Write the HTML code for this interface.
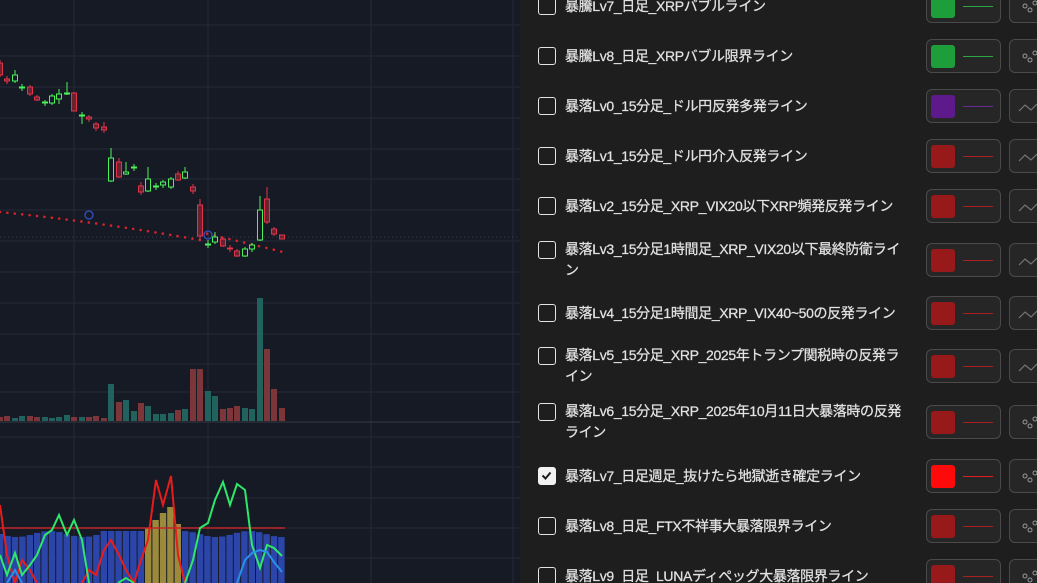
<!DOCTYPE html>
<html><head><meta charset="utf-8">
<style>
*{margin:0;padding:0;box-sizing:border-box}
html,body{overflow:hidden}
body{width:1037px;height:583px;background:#161a25;position:relative;font-family:"Liberation Sans","Noto Sans CJK JP",sans-serif}
#chart{position:absolute;left:0;top:0}
#panel{position:absolute;left:520px;top:0;width:517px;height:583px;background:#1e1e1e;overflow:hidden}
.row{position:absolute;left:0;width:517px}
.cb{position:absolute;left:18px;width:18px;height:18px;border:1.5px solid #e3e3e3;border-radius:3px}
.cb.on{background:#f2f2f2;border-color:#f2f2f2}
.lbl{position:absolute;left:45px;color:#e2e2e2;font-size:14px;line-height:21px;white-space:nowrap;letter-spacing:-0.35px;-webkit-text-stroke:0.25px #e2e2e2}
.btn{position:absolute;left:406px;width:75px;height:34px;border:1px solid #4a4a4a;border-radius:6px;background:#262626}
.sw{position:absolute;left:4px;top:5px;width:24px;height:23px;border-radius:3px}
.ln{position:absolute;left:36px;top:16px;width:30px;height:1px}
.btn2{position:absolute;left:489px;width:40px;height:34px;border:1px solid #4a4a4a;border-radius:6px;background:#262626}
</style></head><body>
<svg id="chart" width="520" height="583" viewBox="0 0 520 583"></svg>
<div id="panel"></div>
<script>
const S='http://www.w3.org/2000/svg';const svg=document.getElementById('chart');
function el(t,a){const e=document.createElementNS(S,t);for(const k in a)e.setAttribute(k,a[k]);svg.appendChild(e);return e}
[74,208,371,513].forEach(x=>el('line',{x1:x,y1:0,x2:x,y2:583,stroke:'#242936','stroke-width':1}));
[25,56,87,118,149,179,210,241,272,303,334,364,392,437,467,498,528,558].forEach(y=>el('line',{x1:0,y1:y,x2:520,y2:y,stroke:'#242936','stroke-width':1}));
el('line',{x1:0,y1:422,x2:520,y2:422,stroke:'#363a45','stroke-width':1});
el('line',{x1:0,y1:237,x2:520,y2:237,stroke:'#3a3f4c','stroke-width':1,'stroke-dasharray':'1 3'});
for(let x=0;x<=284;x+=7.4){let y=x<200?212+x*0.1+ (x/200)*(x/200)*8:232+(x-200)*0.24;el('circle',{cx:x,cy:y,r:1.3,fill:'#d3242b'})}
el('circle',{cx:89,cy:215,r:4,fill:'none',stroke:'#3050c8','stroke-width':1.3});
el('circle',{cx:208,cy:235,r:4,fill:'none',stroke:'#3050c8','stroke-width':1.3});
const C=[[0,'r',63,75,60,77],[7,'r',79,81,76,84],[15,'g',75,81,70,83],[22,'g',87,88,84,91],[30,'r',87,94,85,96],[37,'r',97,100,95,101],[45,'g',102,103,100,106],[52,'g',96,103,94,105],[59,'g',94,99,89,104],[67,'g',93,94,82,95],[74,'r',93,111,92,111],[82,'g',115,116,112,124],[89,'r',117,119,115,122],[96,'r',124,128,122,131],[104,'r',127,130,122,133],[111,'g',158,181,148,182],[119,'r',162,177,158,178],[126,'g',172,174,162,175],[134,'g',167,168,164,171],[141,'r',186,192,182,195],[148,'g',179,191,167,192],[156,'g',186,187,183,190],[163,'g',182,185,180,188],[171,'g',179,187,177,189],[178,'r',174,180,171,181],[185,'g',172,178,167,179],[193,'r',187,191,184,194],[200,'r',205,236,199,240],[208,'g',244,245,240,248],[215,'g',237,242,232,244],[223,'r',239,246,237,247],[230,'r',248,249,245,252],[237,'r',251,256,249,257],[245,'g',249,256,247,257],[252,'g',245,249,243,252],[260,'g',210,240,196,241],[267,'r',199,222,187,224],[274,'r',229,234,227,236],[282,'r',235,239,235,239]];
C.forEach(c=>{const col=c[1]=='g'?'#4cf25a':'#e0344a';el('line',{x1:c[0],y1:c[4],x2:c[0],y2:c[5],stroke:col,'stroke-width':1});el('rect',{x:c[0]-2.5,y:c[2],width:5,height:Math.max(1,c[3]-c[2]),fill:c[1]=='g'?'#161a25':'#6a2230',stroke:col,'stroke-width':1})});
const V=[[0,'r',417],[7,'r',416],[15,'g',418],[22,'g',416],[30,'r',416],[37,'r',417],[45,'g',417],[52,'g',418],[59,'g',417],[67,'g',415],[74,'r',417],[82,'g',417],[89,'r',417],[96,'r',416],[104,'r',418],[111,'g',384],[119,'r',402],[126,'g',400],[134,'g',411],[141,'r',403],[148,'g',406],[156,'g',414],[163,'g',414],[171,'g',413],[178,'r',410],[185,'g',409],[193,'r',369],[200,'r',369],[208,'g',391],[215,'g',396],[223,'r',409],[230,'r',408],[237,'r',406],[245,'g',408],[252,'g',409],[260,'g',298],[267,'r',349],[274,'r',389],[282,'r',408]];
V.forEach(v=>el('rect',{x:v[0]-3,y:v[2],width:6,height:421-v[2],fill:v[1]=='g'?'#22625e':'#7c3538'}));
for(let i=0;i<39;i++){const x=i*7.4-3;const yel=i>=20&&i<=24;let top=534+Math.sin(i*0.7)*3;if(yel)top=[528,520,513,507,524][i-20];if(i>=14&&i<20)top=531;el('rect',{x:x,y:top,width:6.4,height:583-top,fill:yel?'#9c8a3c':'#2c45a8'})}
el('line',{x1:0,y1:528,x2:285,y2:528,stroke:'#c0262b','stroke-width':1.5});
const poly=(pts,col)=>el('polyline',{points:pts,fill:'none',stroke:col,'stroke-width':2});
poly('0,505 7,555 15,583 22,560 30,570 37,583','#e81c1c');
poly('82,583 89,570 96,575 104,550 111,540 119,555 126,570 134,583','#e81c1c');
poly('134,583 141,560 148,540 156,480 163,505 171,476 178,555 185,583','#e81c1c');
poly('0,555 7,575 15,553 22,575 30,565 37,555 45,535 52,530 59,515 67,535 74,520 82,540 89,583','#2ee86a');
poly('118,583 126,578 134,583','#2ee86a');
poly('185,583 193,560 200,528 208,523 215,500 223,482 230,505 237,484 245,490 252,545 260,568 267,545 274,548 282,556','#2ee86a');
poly('7,583 15,570 22,583','#2a8fe8');
poly('237,583 245,560 252,553 260,550 267,552 274,562 282,572','#2a8fe8');
const P=document.getElementById('panel');
const R=[
[6,['暴騰Lv7_日足_XRPバブルライン'],'#1d9e3a','#2aa846','dots',false],
[56,['暴騰Lv8_日足_XRPバブル限界ライン'],'#1d9e3a','#2aa846','dots',false],
[106,['暴落Lv0_15分足_ドル円反発多発ライン'],'#5e1a8a','#6a2a9a','wave',false],
[156,['暴落Lv1_15分足_ドル円介入反発ライン'],'#981919','#a82020','wave',false],
[206,['暴落Lv2_15分足_XRP_VIX20以下XRP頻発反発ライン'],'#981919','#a82020','wave',false],
[260,['暴落Lv3_15分足1時間足_XRP_VIX20以下最終防衛ライ','ン'],'#981919','#a82020','wave',false],
[313,['暴落Lv4_15分足1時間足_XRP_VIX40~50の反発ライン'],'#981919','#a82020','wave',false],
[366,['暴落Lv5_15分足_XRP_2025年トランプ関税時の反発ラ','イン'],'#981919','#a82020','wave',false],
[422,['暴落Lv6_15分足_XRP_2025年10月11日大暴落時の反発','ライン'],'#981919','#a82020','dots',false],
[476,['暴落Lv7_日足週足_抜けたら地獄逝き確定ライン'],'#ff0a0a','#e02020','dots',true],
[526,['暴落Lv8_日足_FTX不祥事大暴落限界ライン'],'#981919','#a82020','dots',false],
[576,['暴落Lv9_日足_LUNAディペッグ大暴落限界ライン'],'#981919','#a82020','dots',false]];
R.forEach(r=>{const [cy,t,sw,lc,ic,on]=r;const two=t.length>1;
let h='';const cbTop=two?cy-10-9:cy-9;
h+=`<div class="cb${on?' on':''}" style="top:${cbTop}px">${on?'<svg width="15" height="15" viewBox="0 0 15 15" style="position:absolute;left:0;top:0"><path d="M3.5 7.5l3 3 5-6" fill="none" stroke="#1e1e1e" stroke-width="2"/></svg>':''}</div>`;
h+=`<div class="lbl" style="top:${(two?cy-21:cy-10.5)}px">${t.join('<br>')}</div>`;
h+=`<div class="btn" style="top:${cy-17}px"><div class="sw" style="background:${sw}"></div><div class="ln" style="background:${lc}"></div></div>`;
const icon=ic=='dots'?'<svg width="30" height="30" viewBox="0 0 30 30" style="position:absolute;left:6px;top:2px"><circle cx="9" cy="14" r="2" fill="none" stroke="#999"/><circle cx="14" cy="18" r="2" fill="none" stroke="#999"/><circle cx="19" cy="11" r="2" fill="none" stroke="#999"/></svg>':'<svg width="30" height="30" viewBox="0 0 30 30" style="position:absolute;left:6px;top:2px"><path d="M3 19l6-6 6 5 6-6" fill="none" stroke="#777" stroke-width="1.2"/></svg>';
h+=`<div class="btn2" style="top:${cy-17}px">${icon}</div>`;
const d=document.createElement('div');d.className='row';d.style.top='0';d.innerHTML=h;P.appendChild(d)});
</script>
</body></html>
